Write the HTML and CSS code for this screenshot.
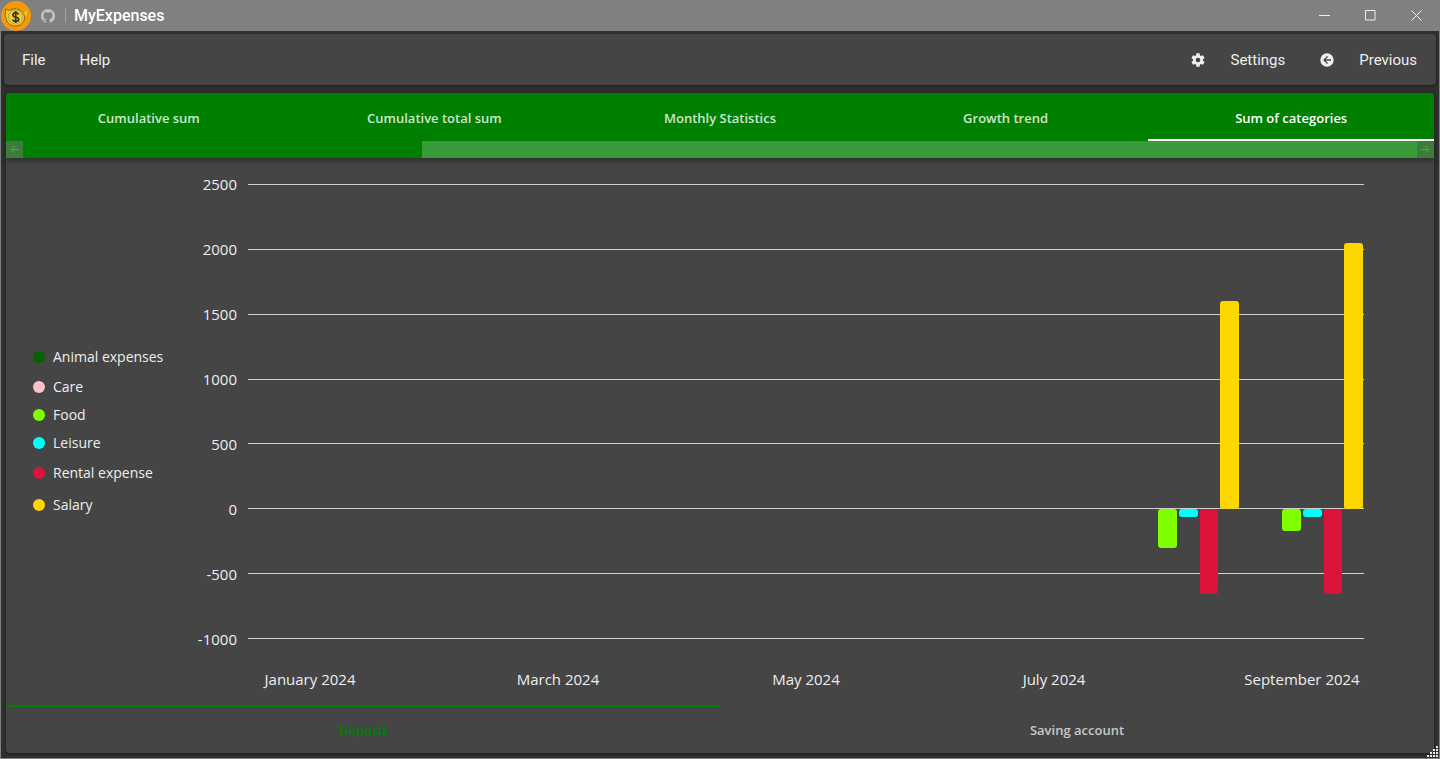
FILE: index.html
```html
<!DOCTYPE html>
<html lang="en">
<head>
<meta charset="utf-8">
<title>MyExpenses</title>
<link rel="stylesheet" href="styles.css">
</head>
<body>
<div class="window">
  <header class="titlebar">
    <svg class="logo" viewBox="0 0 30 30" aria-hidden="true">
      <circle cx="15" cy="15" r="15" fill="#f69808"/>
      <path d="M21 11.500c2 .5 3-.5 5-2.500.8 3-.5 6.500-3.500 8z" fill="#f4c42c"/>
      <path d="M4.200 8.200l4.300 1.300c2-1.300 3.500-1.600 5-1.600l2-.7 1.500 1.300c4 1 6.500 4.300 6.500 8 0 5-4 8.500-9 8.500s-9.300-3.500-9.500-8.500L3.800 15l.9-2.500z" fill="#f2ca30" stroke="#6e6122" stroke-width=".9" stroke-linejoin="round"/>
      <circle cx="14.500" cy="16" r="7" fill="#f5d033" stroke="#a98d28" stroke-width=".7"/>
      <path d="M17.600 13.500c-.5-1.100-1.500-1.700-2.900-1.700-1.700 0-2.800.8-2.800 2.100 0 2.800 5.800 1.400 5.800 4.300 0 1.400-1.200 2.200-3 2.200-1.500 0-2.600-.6-3.200-1.800M14.700 10v12" fill="none" stroke="#34342a" stroke-width="1.700"/>
    </svg>
    <a class="github" href="#" aria-label="GitHub">
      <svg viewBox="0 0 16 16" width="14" height="14" aria-hidden="true"><path fill="currentColor" d="M8 0C3.580 0 0 3.580 0 8c0 3.540 2.290 6.530 5.470 7.590.4.070.55-.17.55-.38 0-.19-.01-.82-.01-1.490-2.010.37-2.530-.49-2.690-.94-.09-.23-.48-.94-.82-1.130-.28-.15-.68-.52-.01-.53.63-.01 1.080.58 1.230.82.72 1.210 1.870.87 2.330.66.07-.52.28-.87.51-1.070-1.780-.2-3.640-.89-3.640-3.950 0-.87.31-1.590.82-2.150-.08-.2-.36-1.020.08-2.120 0 0 .67-.21 2.200.82.64-.18 1.320-.27 2-.27s1.360.09 2 .27c1.530-1.040 2.200-.82 2.200-.82.44 1.100.16 1.920.08 2.120.51.56.82 1.270.82 2.150 0 3.070-1.870 3.750-3.650 3.950.29.25.54.73.54 1.480 0 1.070-.01 1.930-.01 2.200 0 .21.15.46.55.38A8.010 8.010 0 0 0 16 8c0-4.420-3.580-8-8-8z"/></svg>
    </a>
    <span class="divider"></span>
    <h1 class="title">MyExpenses</h1>
    <div class="window-controls">
      <button type="button" class="window-button" aria-label="Minimize"><svg viewBox="0 0 11 11" width="11" height="11"><path d="M0 5.500h11"/></svg></button>
      <button type="button" class="window-button" aria-label="Maximize"><svg viewBox="0 0 11 11" width="11" height="11"><path d="M.5.500h9.500v9.500H.5z"/></svg></button>
      <button type="button" class="window-button" aria-label="Close"><svg viewBox="0 0 11 11" width="11" height="11"><path d="M.5.500l10 10M10.500.500l-10 10"/></svg></button>
    </div>
  </header>

  <div class="body">
    <nav class="menu">
      <button type="button" class="menu-item">File</button>
      <button type="button" class="menu-item">Help</button>
      <span class="spacer"></span>
      <button type="button" class="menu-item menu-item--icon">
        <svg viewBox="0 0 24 24" width="16" height="16" aria-hidden="true"><path fill="currentColor" d="M12 15.500A3.500 3.500 0 0 1 8.500 12 3.500 3.500 0 0 1 12 8.500a3.500 3.500 0 0 1 3.500 3.500 3.500 3.500 0 0 1-3.500 3.500m7.430-2.530c.04-.32.07-.64.07-.97s-.03-.66-.07-1l2.110-1.630c.19-.15.24-.42.12-.64l-2-3.460c-.12-.22-.39-.31-.61-.22l-2.490 1c-.52-.39-1.060-.73-1.690-.98l-.37-2.650A.506.506 0 0 0 14 2h-4c-.25 0-.46.18-.5.420l-.37 2.650c-.63.250-1.170.590-1.690.980l-2.490-1c-.22-.09-.49 0-.61.220l-2 3.460c-.13.220-.07.490.12.640L4.570 11c-.04.340-.07.670-.07 1s.03.650.07.970l-2.110 1.660c-.19.150-.25.420-.12.640l2 3.460c.12.220.39.300.61.220l2.490-1.010c.52.400 1.060.740 1.690.990l.37 2.650c.04.240.25.420.5.420h4c.25 0 .46-.18.5-.42l.37-2.650c.63-.26 1.170-.59 1.690-.99l2.490 1.010c.22.080.49 0 .61-.22l2-3.460c.12-.22.07-.49-.12-.64z"/></svg>
        Settings
      </button>
      <button type="button" class="menu-item menu-item--icon">
        <svg viewBox="0 0 24 24" width="16" height="16" aria-hidden="true"><path fill="currentColor" d="M2 12A10 10 0 0 1 12 2a10 10 0 0 1 10 10 10 10 0 0 1-10 10A10 10 0 0 1 2 12m16-1h-8l3.500-3.500-1.420-1.420L6.160 12l5.920 5.920 1.420-1.420L10 13h8z"/></svg>
        Previous
      </button>
    </nav>

    <main class="card">
      <div class="top-tabs">
        <div class="tabs" role="tablist" aria-label="Statistics">
          <button type="button" class="tab" role="tab">Cumulative sum</button>
          <button type="button" class="tab" role="tab">Cumulative total sum</button>
          <button type="button" class="tab" role="tab">Monthly Statistics</button>
          <button type="button" class="tab" role="tab">Growth trend</button>
          <button type="button" class="tab tab--active" role="tab" aria-selected="true">Sum of categories</button>
        </div>
        <div class="scrollbar">
          <button type="button" class="scroll-button" aria-label="Scroll left"><svg viewBox="0 0 9 9" width="9" height="9"><path d="M8.500 4.500h-7M4.500 1l-3.500 3.500 3.500 3.500"/></svg></button>
          <div class="scroll-track"></div>
          <div class="scroll-thumb"></div>
          <button type="button" class="scroll-button" aria-label="Scroll right"><svg viewBox="0 0 9 9" width="9" height="9"><path d="M.5 4.500h7M4.500 1l3.500 3.500-3.500 3.500"/></svg></button>
        </div>
      </div>

      <section class="content">
        <ul class="legend">
          <li class="legend-item legend-item--tall"><span class="dot animal"></span>Animal expenses</li>
          <li class="legend-item"><span class="dot care"></span>Care</li>
          <li class="legend-item"><span class="dot food"></span>Food</li>
          <li class="legend-item"><span class="dot leisure"></span>Leisure</li>
          <li class="legend-item legend-item--tall"><span class="dot rental"></span>Rental expense</li>
          <li class="legend-item legend-item--tall"><span class="dot salary"></span>Salary</li>
        </ul>
        <div class="chart">
          <div class="axis-y">
            <span>2500</span><span>2000</span><span>1500</span><span>1000</span><span>500</span><span>0</span><span>-500</span><span>-1000</span>
          </div>
          <div class="plot">
            <div class="gridlines"><i></i><i></i><i></i><i></i><i></i><i></i><i></i><i></i></div>
            <div class="months">
              <div class="month month--august">
                <div class="gains">
                  <span class="bar salary" style="height:64%"></span>
                </div>
                <div class="losses">
                  <span class="bar food" style="height:30%"></span>
                  <span class="bar leisure" style="height:6.500%"></span>
                  <span class="bar rental" style="height:65%"></span>
                </div>
              </div>
              <div class="month month--september">
                <div class="gains">
                  <span class="bar salary" style="height:82%"></span>
                </div>
                <div class="losses">
                  <span class="bar food" style="height:17%"></span>
                  <span class="bar leisure" style="height:6.500%"></span>
                  <span class="bar rental" style="height:65%"></span>
                </div>
              </div>
            </div>
          </div>
          <div class="axis-x">
            <span>January 2024</span><span></span><span>March 2024</span><span></span><span>May 2024</span><span></span><span>July 2024</span><span></span><span>September 2024</span>
          </div>
        </div>
      </section>

      <div class="bottom-tabs" role="tablist" aria-label="Accounts">
        <button type="button" class="account account--active" role="tab" aria-selected="true">Deposit</button>
        <button type="button" class="account" role="tab">Saving account</button>
      </div>
    </main>
  </div>
  <svg class="grip" viewBox="0 0 11 11" width="11" height="11" aria-hidden="true">
    <path fill="#e6eaf2" d="M9 0h2v2H9zM6 3h2v2H6zM9 3h2v2H9zM3 6h2v2H3zM6 6h2v2H6zM9 6h2v2H9zM0 9h2v2H0zM3 9h2v2H3zM6 9h2v2H6zM9 9h2v2H9z"/>
  </svg>
</div>
</body>
</html>
```
FILE: styles.css
```css
* {
  box-sizing: border-box;
}

body {
  margin: 0;
  background: #303030;
  color: #eeeeee;
  font-family: "Open Sans", "Noto Sans", sans-serif;
}

button {
  margin: 0;
  padding: 0;
  border: 0;
  background: none;
  color: inherit;
  font: inherit;
}

svg {
  display: block;
}

.window {
  position: relative;
  display: flex;
  flex-direction: column;
  min-height: 100vh;
  border: solid #808080;
  border-width: 0 1px 1px;
}

.titlebar {
  display: flex;
  align-items: center;
  height: 31px;
  background: #808080;
  font-family: Roboto, sans-serif;
}

.logo {
  width: 30px;
  height: 30px;
}

.github {
  margin: 0 10px;
  color: #c4c4c4;
}

.divider {
  width: 1px;
  height: 15px;
  margin-right: 8px;
  background: #a4a4a4;
}

.title {
  margin: 0;
  color: #ffffff;
  font-size: 16px;
  font-weight: 500;
  line-height: 20px;
}

.window-controls {
  display: flex;
  margin-left: auto;
}

.window-button {
  display: flex;
  align-items: center;
  justify-content: center;
  width: 46px;
  height: 31px;
}

.window-button svg {
  fill: none;
  stroke: #eeeeee;
}

.body {
  display: flex;
  flex: 1;
  flex-direction: column;
  gap: 8px;
  padding: 3px 3px 5px;
}

.menu {
  display: flex;
  align-items: center;
  gap: 34px;
  height: 51px;
  padding: 0 19px 0 18px;
  border-radius: 4px;
  background: #454545;
  box-shadow: 0 1px 3px #1c1c1c;
  font-family: Roboto, sans-serif;
  font-size: 15px;
  line-height: 20px;
}

.menu-item--icon {
  display: flex;
  align-items: center;
  gap: 24px;
}

.spacer {
  flex: 1;
}

.card {
  display: flex;
  flex: 1;
  flex-direction: column;
  margin: 0 2px;
  border-radius: 4px;
  background: #454545;
  box-shadow: 0 1px 3px #1c1c1c;
}

.top-tabs {
  border-radius: 4px 4px 0 0;
  background: #008000;
  box-shadow: 0 2px 5px #2a2a2a;
}

.tabs {
  display: grid;
  grid-template-columns: repeat(5, 1fr);
}

.tab,
.account {
  height: 48px;
  font-size: 13px;
  font-weight: 600;
}

.tab {
  padding-top: 4px;
  border-bottom: 2px solid transparent;
  color: #cce6cc;
}

.tab--active {
  border-bottom-color: #ffffff;
  color: #ffffff;
}

.scrollbar {
  display: flex;
  height: 17px;
}

.scroll-button {
  display: flex;
  align-items: center;
  justify-content: center;
  width: 17px;
  background: #3c7d3c;
}

.scroll-button svg {
  fill: none;
  stroke: #5f9c5f;
}

.scroll-track {
  flex: 399;
}

.scroll-thumb {
  flex: 995;
  background: #3a9b3a;
}

.content {
  display: grid;
  flex: 1;
  grid-template-columns: 158px 1fr;
  padding: 26px 70px 16px 27px;
}

.legend {
  align-self: center;
  margin: 0;
  padding: 0 0 12px;
  list-style: none;
  font-size: 14px;
  line-height: 20px;
}

.legend-item {
  display: flex;
  align-items: center;
  gap: 8px;
  height: 28px;
}

.legend-item--tall {
  height: 32px;
}

.dot {
  width: 12px;
  height: 12px;
  border-radius: 50%;
}

.animal { background: #006400; }
.care { background: #ffc0cb; }
.food { background: #7fff00; }
.leisure { background: #00ffff; }
.rental { background: #dc143c; }
.salary { background: #ffd700; }

.chart {
  display: grid;
  grid-template-columns: 46px 1fr;
  grid-template-rows: 1fr auto;
  column-gap: 11px;
  row-gap: 30px;
  font-size: 15px;
  line-height: 20px;
}

.axis-y {
  display: flex;
  flex-direction: column;
  justify-content: space-between;
  margin: -10px 0;
  text-align: right;
}

.plot {
  display: grid;
}

.gridlines,
.months {
  grid-area: 1 / 1;
}

.gridlines {
  display: flex;
  flex-direction: column;
  justify-content: space-between;
}

.gridlines i {
  height: 1px;
  background: #d0d0d0;
}

.months {
  display: grid;
  grid-template-columns: repeat(9, 1fr);
}

.month {
  display: grid;
  grid-template-rows: 2500fr 1000fr;
}

.month--august {
  grid-column: 8;
}

.month--september {
  grid-column: 9;
}

.gains,
.losses {
  display: grid;
  grid-template-columns: repeat(6, 1fr);
}

.gains {
  align-items: end;
}

.bar {
  margin: 0 1px;
  border-radius: 3px;
}

.bar.food { grid-column: 3; }
.bar.leisure { grid-column: 4; }
.bar.rental { grid-column: 5; }
.bar.salary { grid-column: 6; }

.axis-x {
  display: grid;
  grid-column: 2;
  grid-template-columns: repeat(9, 1fr);
  text-align: center;
  white-space: nowrap;
}

.bottom-tabs {
  display: grid;
  grid-template-columns: 1fr 1fr;
}

.account {
  padding-bottom: 0;
  border-top: 2px solid transparent;
  color: #c8c8c8;
}

.account--active {
  border-top-color: #008000;
  color: #008000;
}

.grip {
  position: absolute;
  right: 1px;
  bottom: 1px;
}
```
